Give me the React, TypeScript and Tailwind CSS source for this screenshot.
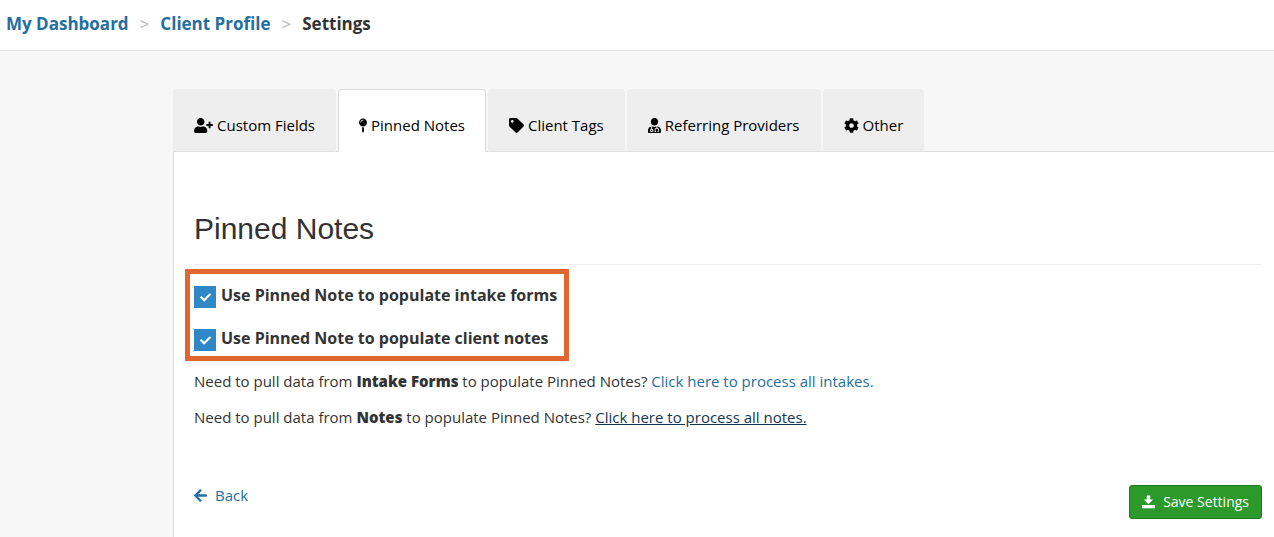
import { useState } from 'react';
import type { ReactNode } from 'react';
import { FaArrowLeft, FaCheck, FaCog, FaMapPin, FaTag, FaUserMd, FaUserPlus } from 'react-icons/fa';

interface Tab {
  id: string;
  label: string;
  icon: ReactNode;
}

const tabs: Tab[] = [
  { id: 'fields', label: 'Custom Fields', icon: <FaUserPlus className="h-[15px] w-[19px]" /> },
  { id: 'pinned', label: 'Pinned Notes', icon: <FaMapPin className="h-[15px] w-2" /> },
  { id: 'tags', label: 'Client Tags', icon: <FaTag className="size-[15px]" /> },
  { id: 'providers', label: 'Referring Providers', icon: <FaUserMd className="h-[15px] w-[13px]" /> },
  { id: 'other', label: 'Other', icon: <FaCog className="size-[15px]" /> },
];

function SaveIcon() {
  return (
    <svg viewBox="0 0 14 14" className="h-[14px] w-[13px]" fill="currentColor" aria-hidden="true">
      <path d="M5.200 0h3.600v4.200h3.200L7 9.300 2 4.200h3.200zM0 10.300h14v3.400H0z" />
    </svg>
  );
}

interface CheckOptionProps {
  id: string;
  label: string;
}

function CheckOption({ id, label }: CheckOptionProps) {
  const [checked, setChecked] = useState(true);

  return (
    <div className="flex items-start gap-[5px]">
      <span className="relative mt-px size-[22px]">
        <input
          id={id}
          type="checkbox"
          checked={checked}
          onChange={(e) => setChecked(e.target.checked)}
          className="block size-full appearance-none border border-[#2f87c5] bg-white checked:bg-[#2f87c5]"
        />
        {checked && <FaCheck className="pointer-events-none absolute inset-0 m-auto size-[11px] text-white" />}
      </span>
      <label htmlFor={id} className="text-base leading-[21px] font-bold">
        {label}
      </label>
    </div>
  );
}

export default function App() {
  const [activeTab, setActiveTab] = useState('pinned');

  return (
    <div className="flex min-h-screen flex-col bg-[#f7f7f7] font-['Open_Sans',sans-serif] text-[15px] leading-[21px] text-[#333]">
      {/* Breadcrumb */}
      <nav aria-label="Breadcrumb" className="border-b border-[#e7e7e7] bg-white px-[6px] pt-3 pb-[14px]">
        <ol className="flex gap-[11px] text-[17px] leading-6 font-bold">
          <li><a href="#" className="text-[#246ea2]">My Dashboard</a></li>
          <li aria-hidden="true" className="font-semibold text-[#c4c4c4]">&gt;</li>
          <li><a href="#" className="text-[#246ea2]">Client Profile</a></li>
          <li aria-hidden="true" className="font-semibold text-[#c4c4c4]">&gt;</li>
          <li aria-current="page">Settings</li>
        </ol>
      </nav>

      <div className="ml-[173px] flex flex-1 flex-col pt-[38px]">
        {/* Tabs */}
        <div role="tablist" className="flex gap-[2px] border-b border-[#ddd]">
          {tabs.map((tab) => (
            <button
              key={tab.id}
              type="button"
              role="tab"
              aria-selected={activeTab === tab.id}
              onClick={() => setActiveTab(tab.id)}
              className={
                activeTab === tab.id
                  ? '-mb-px flex items-center gap-1 rounded-t border border-[#ddd] border-b-white bg-white px-5 pt-[25px] pb-[15px] text-black'
                  : '-mb-px flex items-center gap-1 rounded-t border border-[#eee] border-b-[#ddd] bg-[#eee] px-5 pt-[25px] pb-[15px] text-black'
              }
            >
              {tab.icon}
              {tab.label}
            </button>
          ))}
        </div>

        {/* Panel */}
        <main className="flex-1 border-l border-[#ddd] bg-white pt-[60px] pr-3 pb-[18px] pl-5">
          <h1 className="border-b border-[#eee] pb-[19px] font-['Liberation_Sans',sans-serif] text-[30px] leading-[33px]">
            Pinned Notes
          </h1>

          <div className="-ml-[9px] mt-1 flex w-fit flex-col gap-5 border-[5px] border-[#e2662f] pt-[11px] pr-[7px] pb-[5px] pl-1">
            <CheckOption id="populate-intakes" label="Use Pinned Note to populate intake forms" />
            <CheckOption id="populate-notes" label="Use Pinned Note to populate client notes" />
          </div>

          <p className="mt-[10px]">
            Need to pull data from <strong className="font-extrabold">Intake Forms</strong> to populate Pinned Notes?{' '}
            <a href="#" className="text-[#246ea2]">Click here to process all intakes.</a>
          </p>
          <p className="mt-[15px]">
            Need to pull data from <strong className="font-extrabold">Notes</strong> to populate Pinned Notes?{' '}
            <a href="#" className="text-[#12354f] underline">Click here to process all notes.</a>
          </p>

          <div className="mt-[57px] flex items-start justify-between">
            <a href="#" className="flex items-center gap-2 text-[#246ea2]">
              <FaArrowLeft className="h-[15px] w-[13px]" />
              Back
            </a>
            <button
              type="button"
              className="flex items-center gap-2 rounded-[3px] border border-[#1f7a1f] bg-[#2b9a2b] px-3 py-[6px] text-sm leading-5 text-white"
            >
              <SaveIcon />
              Save Settings
            </button>
          </div>
        </main>
      </div>
    </div>
  );
}
